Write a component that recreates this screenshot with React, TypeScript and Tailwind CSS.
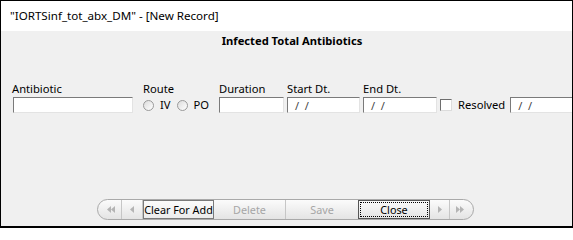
import React from 'react';

const font = "font-['Segoe_UI','Noto_Sans',sans-serif]";

// Sunken classic-Windows text box
const Field: React.FC<{ width: string; date?: boolean }> = ({ width, date }) => (
  <div
    className={`${width} shrink-0 h-[16px] bg-white border border-t-[#7a7a7a] border-l-[#7a7a7a] border-b-[#e3e3e3] border-r-[#e3e3e3] flex items-center pl-[7px] text-[11px] leading-none text-[#444] whitespace-pre`}
  >
    {date ? '/  /' : ''}
  </div>
);

const Radio: React.FC = () => (
  <span className="shrink-0 inline-block w-[11px] h-[11px] rounded-full border border-[#9a9a9a] bg-gradient-to-br from-[#dcdcdc] to-white" />
);

const Arrow: React.FC<{ dir: 'left' | 'right'; double?: boolean }> = ({ dir, double }) => {
  const tri = (x: number) =>
    dir === 'left' ? `M${x + 4} 1 L${x} 4.5 L${x + 4} 8 Z` : `M${x} 1 L${x + 4} 4.5 L${x} 8 Z`;
  return (
    <svg width={double ? 10 : 6} height="9" viewBox={double ? '0 0 10 9' : '0 0 6 9'}>
      <path d={tri(1)} fill="#b4b4b4" />
      {double && <path d={tri(5)} fill="#b4b4b4" />}
    </svg>
  );
};

export default function App() {
  return (
    <div className={`w-[573px] h-[228px] border-t border-l border-r border-b-2 border-black flex flex-col ${font} text-[11.2px] leading-[16px] text-black`}>
      <div className="h-[30px] bg-white flex items-center pl-[9px] pb-[1px] text-[11.6px]">
        "IORTSinf_tot_abx_DM" - [New Record]
      </div>

      <div className="flex-1 bg-[#f0f0f0] flex flex-col">
        <div className="mt-[2px] pl-[11px] flex justify-center font-bold">Infected Total Antibiotics</div>

        <div className="mt-[32px] flex items-start whitespace-nowrap">
          <div className="w-[142px] shrink-0 pl-[11px] flex flex-col">
            <span>Antibiotic</span>
            <div className="pl-[1px]"><Field width="w-[120px]" /></div>
          </div>
          <div className="w-[76px] shrink-0 flex flex-col">
            <span>Route</span>
            <div className="h-[16px] flex items-center">
              <Radio />
              <span className="ml-[6px] mr-[6px]">IV</span>
              <Radio />
              <span className="ml-[6px]">PO</span>
            </div>
          </div>
          <div className="w-[68px] shrink-0 flex flex-col">
            <span>Duration</span>
            <Field width="w-[65px]" />
          </div>
          <div className="w-[76px] shrink-0 flex flex-col">
            <span>Start Dt.</span>
            <Field width="w-[73px]" date />
          </div>
          <div className="w-[77px] shrink-0 flex flex-col">
            <span>End Dt.</span>
            <Field width="w-[74px]" date />
          </div>
          <div className="flex-1 flex flex-col overflow-hidden">
            <span>&nbsp;</span>
            <div className="h-[16px] flex items-center">
              <span className="shrink-0 w-[12px] h-[12px] bg-white border border-t-[#6e6e6e] border-l-[#6e6e6e] border-b-[#dcdcdc] border-r-[#dcdcdc]" />
              <span className="ml-[6px]">Resolved</span>
              <div className="ml-[5px] shrink-0"><Field width="w-[70px]" date /></div>
            </div>
          </div>
        </div>

        <div className="mt-auto mb-[6px] flex justify-center pr-[2px]">
          <div className="h-[21px] flex items-stretch border border-[#a9a9a9] rounded-full bg-gradient-to-b from-[#fbfbfb] to-[#e4e4e4] overflow-hidden whitespace-nowrap text-[10.8px]">
            <div className="w-[24px] flex items-center justify-center pl-[3px] border-r border-[#c6c6c6]">
              <Arrow dir="left" double />
            </div>
            <div className="w-[21px] flex items-center justify-center border-r border-[#c6c6c6]">
              <Arrow dir="left" />
            </div>
            <div className="w-[71px] flex items-center justify-center border border-[#7a7a7a] bg-gradient-to-b from-[#fbfbfb] to-[#ececec]">
              Clear For Add
            </div>
            <div className="w-[72px] flex items-center justify-center text-[#a6a6a6] border-r border-[#c6c6c6]">
              Delete
            </div>
            <div className="w-[72px] flex items-center justify-center text-[#a6a6a6]">Save</div>
            <div className="w-[72px] flex items-center justify-center border border-[#555] p-[1px]">
              <div className="w-full h-full flex items-center justify-center border border-dotted border-black">Close</div>
            </div>
            <div className="w-[20px] flex items-center justify-center border-r border-[#c6c6c6]">
              <Arrow dir="right" />
            </div>
            <div className="w-[23px] flex items-center justify-center pr-[4px]">
              <Arrow dir="right" double />
            </div>
          </div>
        </div>
      </div>
    </div>
  );
}
